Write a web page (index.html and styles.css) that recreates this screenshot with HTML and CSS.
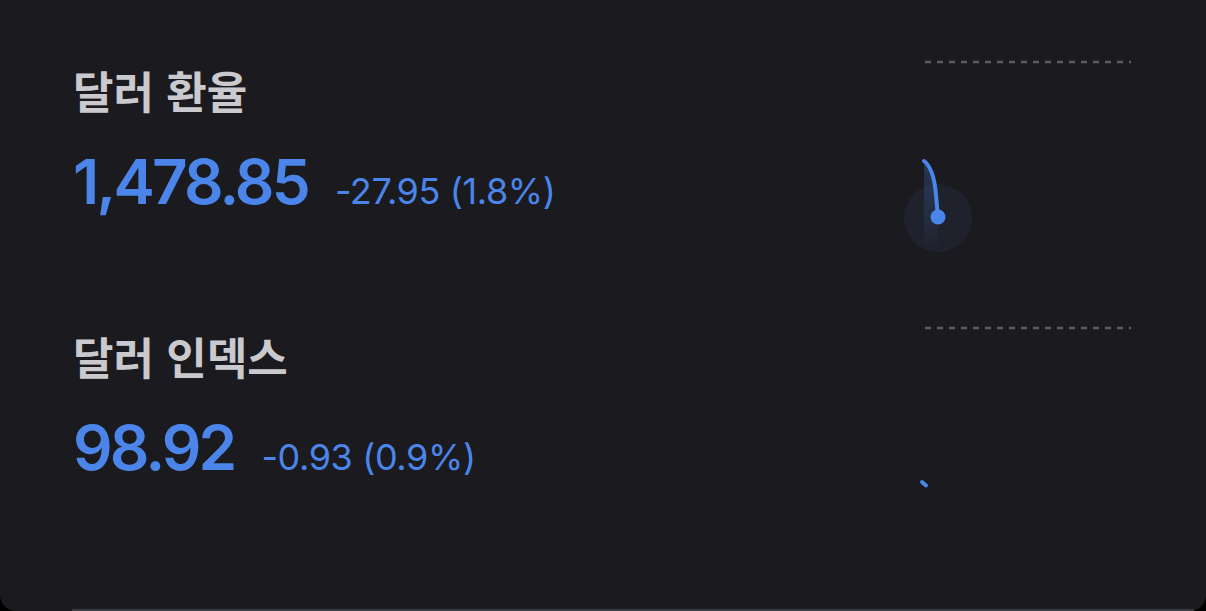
FILE: index.html
```html
<!DOCTYPE html>
<html lang="ko">
<head>
<meta charset="utf-8">
<link rel="stylesheet" href="styles.css">
</head>
<body>
<div class="card">
  <section class="row">
    <div class="info">
      <h2 class="title">달러 환율</h2>
      <div class="quote">
        <span class="value">1,478.85</span>
        <span class="change">-27.95 (1.8%)</span>
      </div>
    </div>
    <div class="chart">
      <svg width="207" height="266" viewBox="0 0 207 266" class="spark">
        <defs>
          <linearGradient id="g1" x1="0" y1="0" x2="0" y2="1">
            <stop offset="0" stop-color="#4a82e8" stop-opacity="0.28"/>
            <stop offset="1" stop-color="#4a82e8" stop-opacity="0"/>
          </linearGradient>
        </defs>
        <line x1="1" y1="12" x2="207" y2="12" class="dash"/>
        <circle cx="14" cy="168" r="34" fill="#1f222c"/>
        <path d="M0 111 Q10 118 12 140 L14 167 L14 200 L0 200 Z" fill="url(#g1)"/>
        <path d="M0 111 Q9 118 11.5 140 L14 167" class="line"/>
        <circle cx="14" cy="167" r="7.5" fill="#4a85ea"/>
      </svg>
    </div>
  </section>
  <section class="row">
    <div class="info">
      <h2 class="title">달러 인덱스</h2>
      <div class="quote">
        <span class="value">98.92</span>
        <span class="change">-0.93 (0.9%)</span>
      </div>
    </div>
    <div class="chart">
      <svg width="207" height="266" viewBox="0 0 207 266" class="spark">
        <line x1="1" y1="12" x2="207" y2="12" class="dash"/>
        <path d="M-2 166 L2 169.5" class="line"/>
      </svg>
    </div>
  </section>
</div>
</body>
</html>
```
FILE: styles.css
```css
html, body {
  margin: 0;
  padding: 0;
  background: #000;
}
body {
  width: 1206px;
  height: 611px;
  overflow: hidden;
}
.card {
  position: relative;
  box-sizing: border-box;
  width: 1206px;
  height: 611px;
  background: #1a1a1f;
  border-radius: 0 0 16px 16px;
  padding: 50px 75px 0 73px;
  overflow: hidden;
}
.card::after {
  content: "";
  position: absolute;
  left: 72px;
  right: 12px;
  bottom: 0;
  height: 2px;
  background: #3a3a41;
}
.row {
  display: flex;
  height: 266px;
}
.info {
  flex: 1;
  padding-top: 14px;
}
.title {
  margin: 0;
  font-family: "Noto Sans CJK KR", "Noto Sans", sans-serif;
  font-weight: 600;
  font-size: 44px;
  line-height: 52px;
  color: #c9c9ce;
  letter-spacing: 0;
}
.quote {
  margin-top: 35px;
  display: flex;
  align-items: baseline;
  gap: 27px;
  color: #4b85ea;
  font-family: Inter, "Liberation Sans", sans-serif;
}
.value {
  font-size: 62px;
  line-height: 62px;
  font-weight: 600;
  letter-spacing: -2.8px;
}
.change {
  font-size: 36px;
  font-weight: 400;
  letter-spacing: -0.4px;
}
.chart {
  width: 207px;
}
.spark {
  display: block;
  overflow: visible;
}
.dash {
  stroke: #5b5b63;
  stroke-width: 2.5;
  stroke-dasharray: 6 6;
}
.line {
  fill: none;
  stroke: #4a85ea;
  stroke-width: 4;
  stroke-linecap: round;
  stroke-linejoin: round;
}
```
